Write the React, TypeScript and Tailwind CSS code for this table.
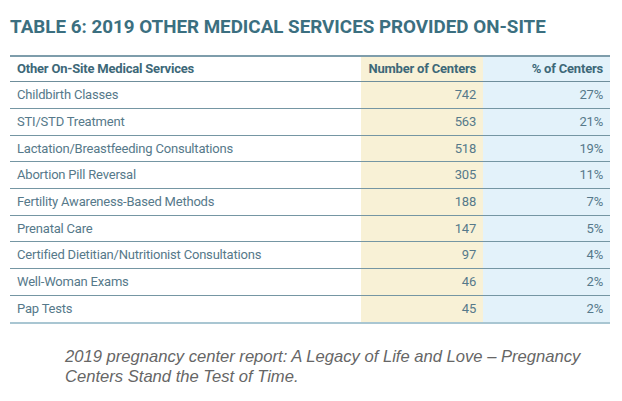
const rows = [
  { name: 'Childbirth Classes', count: 742, pct: '27%', h: 'h-[27px]' },
  { name: 'STI/STD Treatment', count: 563, pct: '21%', h: 'h-[27px]' },
  { name: 'Lactation/Breastfeeding Consultations', count: 518, pct: '19%', h: 'h-[26px]' },
  { name: 'Abortion Pill Reversal', count: 305, pct: '11%', h: 'h-[27px]' },
  { name: 'Fertility Awareness-Based Methods', count: 188, pct: '7%', h: 'h-[27px]' },
  { name: 'Prenatal Care', count: 147, pct: '5%', h: 'h-[26px]' },
  { name: 'Certified Dietitian/Nutritionist Consultations', count: 97, pct: '4%', h: 'h-[27px]' },
  { name: 'Well-Woman Exams', count: 46, pct: '2%', h: 'h-[27px]' },
  { name: 'Pap Tests', count: 45, pct: '2%', h: 'h-[26px]' },
];

export default function App() {
  return (
    <div className="h-[401px] w-[622px] bg-white font-['Roboto',sans-serif]">
      <div className="px-[10px] pt-[14px]">
        <h1 className="h-[26px] text-[18.8px] font-bold leading-[26px] text-[#3b6f80]">
          TABLE 6: 2019 OTHER MEDICAL SERVICES PROVIDED ON-SITE
        </h1>

        <div className="mt-[15px] w-[600px] border-t-2 border-b-2 border-t-[#7e9dab] border-b-[#a9c6d2] tracking-[-0.2px]">
          <div className="grid h-[25px] grid-cols-[351px_122px_127px] border-b border-[#6f8e9b] text-[13px] font-bold text-[#3d6878]">
            <div className="flex items-center pl-[7px]">Other On-Site Medical Services</div>
            <div className="flex items-center justify-end bg-[#f8f1d6] pr-[7px]">Number of Centers</div>
            <div className="flex items-center justify-end bg-[#e3f2fa] pr-[7px]">% of Centers</div>
          </div>
          {rows.map((r, i) => (
            <div
              key={r.name}
              className={`grid grid-cols-[351px_122px_127px] text-[13px] text-[#56798a] ${r.h} ${
                i < rows.length - 1 ? 'border-b border-[#7596a3]' : ''
              }`}
            >
              <div className="flex items-center pl-[7px]">{r.name}</div>
              <div className="flex items-center justify-end bg-[#f8f1d6] pr-[7px]">{r.count}</div>
              <div className="flex items-center justify-end bg-[#e3f2fa] pr-[7px]">{r.pct}</div>
            </div>
          ))}
        </div>
      </div>

      <p className="mt-[23px] w-[615px] pl-[65px] font-['Liberation_Sans',Arial,sans-serif] text-[16.6px] italic leading-[20px] text-[#666666]">
        2019 pregnancy center report: A Legacy of Life and Love – Pregnancy Centers Stand the Test of Time.
      </p>
    </div>
  );
}
